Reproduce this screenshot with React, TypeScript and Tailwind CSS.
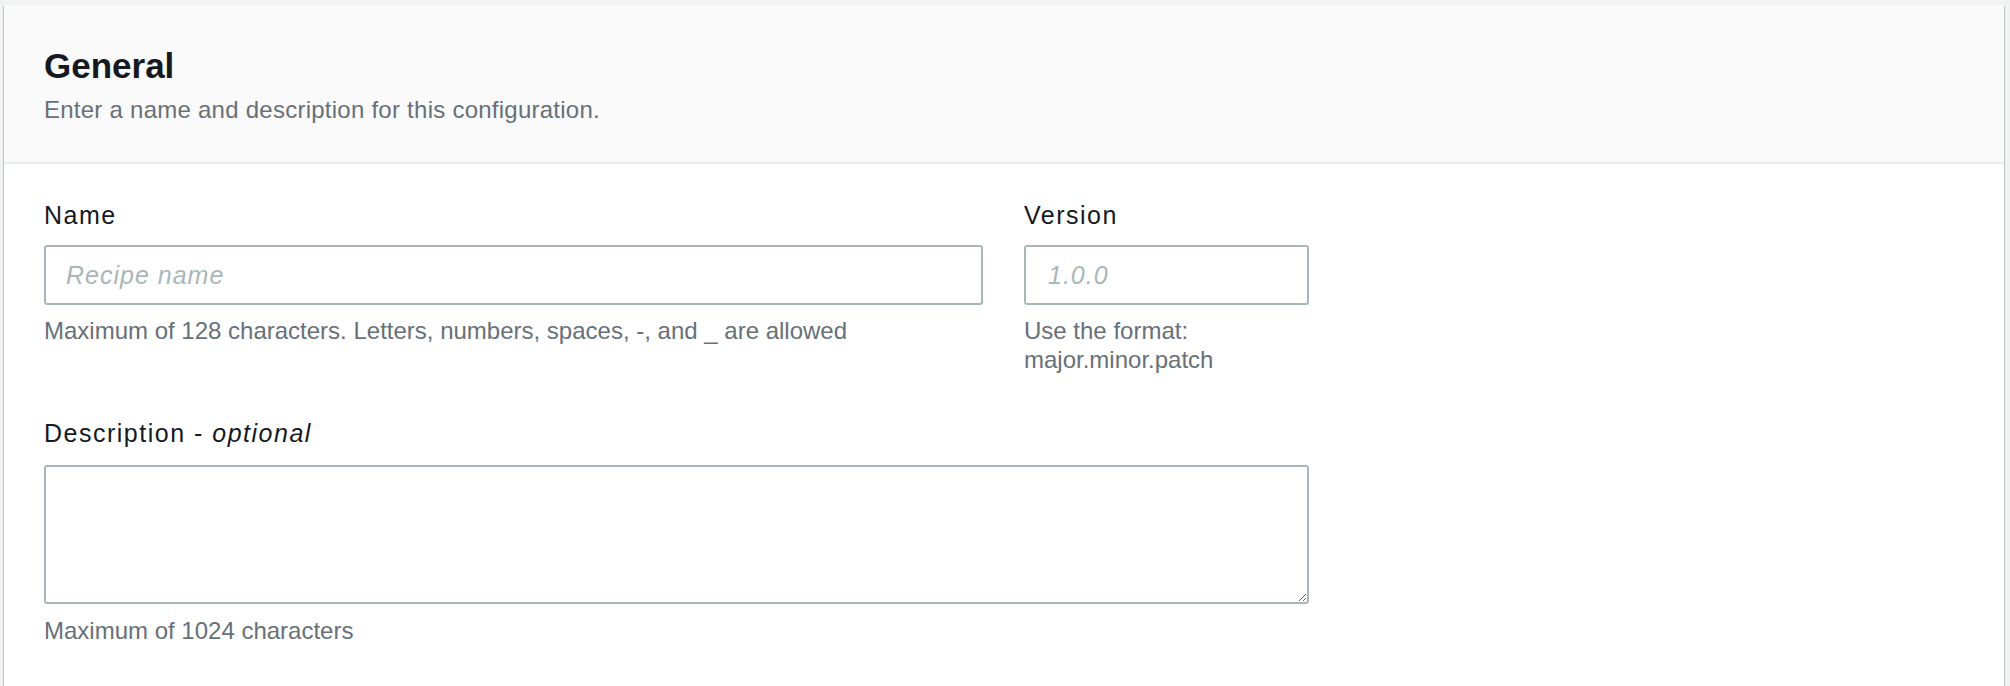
import React from 'react'

const FONT = "font-['Liberation_Sans',Arial,sans-serif]"

function Field({
  label,
  hint,
  children,
}: {
  label: React.ReactNode
  hint: React.ReactNode
  children: React.ReactNode
}) {
  return (
    <div className="flex flex-col">
      <label className="text-[25px] leading-[29px] tracking-[1.5px] text-[#16191f]">{label}</label>
      <div className="mt-[15px]">{children}</div>
      <div className="mt-[11px] text-[24px] leading-[29px] text-[#687078]">{hint}</div>
    </div>
  )
}

const inputCls =
  'block h-[60px] w-full rounded-[3px] border-2 border-[#aab7b8] bg-white px-[20px] text-[25px] tracking-[1px] text-[#16191f] placeholder:italic placeholder:text-[#aab7b8] outline-none'

export default function App() {
  return (
    <div className={`${FONT} min-h-screen bg-[#f2f3f3] pt-[5px] pl-[4px] pr-[6px]`}>
      <section className="bg-white shadow-[0_1px_1px_0_rgba(0,28,36,0.3),1px_1px_1px_0_rgba(0,28,36,0.15),-1px_1px_1px_0_rgba(0,28,36,0.15)]">
        {/* Header */}
        <header className="border-b-2 border-[#eaeded] bg-[#fafafa] px-10 pt-[40px] pb-[38px]">
          <h2 className="text-[35px] font-bold leading-[42px] text-[#16191f]">General</h2>
          <p className="mt-[8px] text-[24px] leading-[29px] tracking-[0.25px] text-[#687078]">
            Enter a name and description for this configuration.
          </p>
        </header>

        {/* Body */}
        <div className="px-10 pt-[37px] pb-[41px]">
          <div className="grid grid-cols-[939px_285px] items-start gap-x-[41px]">
            <Field
              label="Name"
              hint="Maximum of 128 characters. Letters, numbers, spaces, -, and _ are allowed"
            >
              <input type="text" placeholder="Recipe name" className={inputCls} />
            </Field>
            <Field label="Version" hint="Use the format: major.minor.patch">
              <input type="text" placeholder="1.0.0" className={`${inputCls} pl-[22px]`} />
            </Field>
          </div>

          <div className="mt-[45px] flex w-[1265px] flex-col">
            <label className="text-[25px] leading-[29px] tracking-[1.5px] text-[#16191f]">
              Description - <i>optional</i>
            </label>
            <textarea className="mt-[17px] block h-[139px] w-full rounded-[3px] border-2 border-[#aab7b8] bg-white px-[20px] py-[12px] text-[24px] text-[#16191f] outline-none" />
            <div className="mt-[12px] text-[24px] leading-[29px] text-[#687078]">
              Maximum of 1024 characters
            </div>
          </div>
        </div>
      </section>
    </div>
  )
}
